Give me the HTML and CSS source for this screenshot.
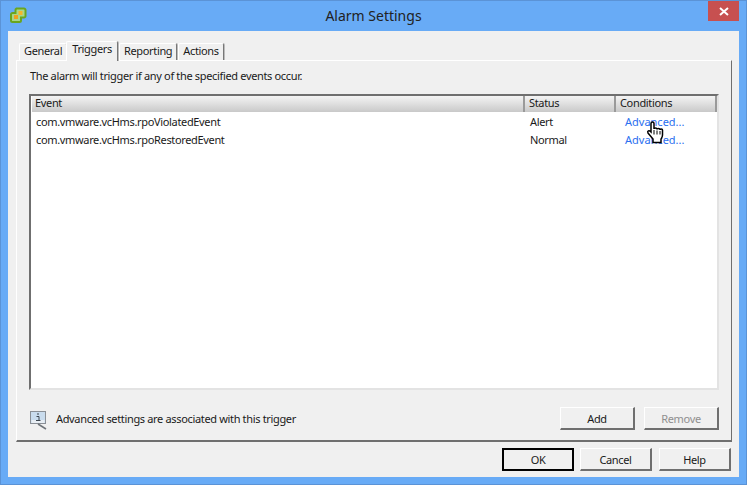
FILE: index.html
```html
<!DOCTYPE html>
<html>
<head>
    <title>Alarm Settings</title>
    <link rel="stylesheet" href="styles.css">
</head>
<body>
<div class="window">
    <div class="titlebar">
        <svg class="app-icon" width="17" height="17" viewBox="0 0 17 17">
            <path d="M6 1.500h8a1.500 1.500 0 0 1 1.500 1.500v6a1.500 1.500 0 0 1-1.500 1.500h-3v3a1.500 1.500 0 0 1-1.500 1.500h-7a1.500 1.500 0 0 1-1.500-1.500v-6a1.500 1.500 0 0 1 1.500-1.500h3v-3a1.500 1.500 0 0 1 1.500-1.500z" fill="#a9d68a" stroke="#6aa51f" stroke-width="2"/>
            <rect x="4" y="8" width="4" height="4" fill="#f0a020"/>
            <rect x="8.500" y="4" width="4" height="4" fill="#f5b52a"/>
        </svg>
        <div class="title">Alarm Settings</div>
        <div class="close">
            <svg width="10" height="9" viewBox="0 0 10 9"><path d="M1 1l8 7M9 1l-8 7" stroke="#fff" stroke-width="2"/></svg>
        </div>
    </div>
    <div class="content">
        <div class="tabs">
            <div class="tab">General</div>
            <div class="tab active">Triggers</div>
            <div class="tab">Reporting</div>
            <div class="tab">Actions</div>
        </div>
        <div class="panel">
            <p class="intro">The alarm will trigger if any of the specified events occur.</p>
            <div class="list">
                <div class="row head">
                    <div class="cell">Event</div>
                    <div class="cell">Status</div>
                    <div class="cell">Conditions</div>
                </div>
                <div class="row">
                    <div class="cell">com.vmware.vcHms.rpoViolatedEvent</div>
                    <div class="cell">Alert</div>
                    <div class="cell link">Advanced...</div>
                </div>
                <div class="row">
                    <div class="cell">com.vmware.vcHms.rpoRestoredEvent</div>
                    <div class="cell">Normal</div>
                    <div class="cell link">Advanced...</div>
                </div>
            </div>
            <div class="panel-foot">
                <svg class="info-icon" width="17" height="19" viewBox="0 0 17 19">
                    <rect x="0.500" y="0.500" width="15" height="12" fill="#c9dcee" stroke="#8a8f96"/>
                    <rect x="1.500" y="9" width="13" height="3" fill="#e8eef4"/>
                    <path d="M7 3h2M6.500 5.500h2.500v3.500M6 9.500h4.500" stroke="#3d4650" stroke-width="1" fill="none"/>
                    <path d="M8 13l8 5" stroke="#6f747a" stroke-width="1.500"/>
                </svg>
                <span class="note">Advanced settings are associated with this trigger</span>
                <div class="btn add">Add</div>
                <div class="btn add disabled">Remove</div>
            </div>
        </div>
        <div class="actions">
            <div class="btn main default">OK</div>
            <div class="btn main">Cancel</div>
            <div class="btn main help">Help</div>
        </div>
    </div>
    <svg class="cursor" width="18" height="23" viewBox="0 0 18 23">
        <path d="M5 2.500c0-2 3-2 3 0v5.500c0-1.500 3-1.500 3 0v.5c0-1.500 3-1.500 3 0v.5c0-1.500 2.500-1.500 2.500 0v5c0 2-1 3-1.500 4v3.500h-8v-3.500l-5-6c-1-2 1-3 2.500-1.500l.5.5z" fill="#fff" stroke="#000" stroke-width="1.500"/>
        <path d="M8 9v4.500M11 9.500v4M14 10v3.500" stroke="#000" stroke-width="1"/>
    </svg>
</div>
</body>
</html>
```

FILE: styles.css
```css
html, body {
    margin: 0;
    height: 100%;
}
body {
    font-family: "Noto Sans", sans-serif;
    font-size: 11px;
    letter-spacing: -0.34px;
    color: #1a1a1a;
    overflow: hidden;
}
.window {
    position: relative;
    box-sizing: border-box;
    width: 747px;
    height: 485px;
    background: #68abf6;
    border: 1px solid #5b93d6;
    display: flex;
    flex-direction: column;
}
.titlebar {
    height: 30px;
    flex: none;
    display: flex;
    padding-left: 9px;
}
.app-icon {
    margin-top: 6px;
}
.title {
    flex: 1;
    text-align: center;
    font-size: 14px;
    letter-spacing: 0;
    line-height: 30px;
    color: #222;
    padding-left: 12px;
}
.close {
    width: 31px;
    height: 20px;
    margin-right: 7px;
    background: #c75050;
    display: flex;
    align-items: center;
    justify-content: center;
}
.content {
    flex: 1;
    margin: 0 7px 7px;
    background: #f0f0f0;
    padding: 9px 8px 6px;
    display: flex;
    flex-direction: column;
}
.tabs {
    display: flex;
    height: 20px;
    padding-left: 3px;
    align-items: flex-end;
}
.tab {
    height: 16px;
    line-height: 13px;
    padding: 0 4px;
    margin-right: 1px;
    background: #f0f0f0;
    border: 1px solid #fff;
    border-bottom: none;
    border-right: 1px solid #777;
    box-shadow: 1px 0 0 #bbb;
    border-radius: 2px 2px 0 0;
}
.tab.active {
    height: 19px;
    line-height: 13px;
    margin-left: -2px;
    padding: 0 5px;
    position: relative;
    top: 1px;
    z-index: 1;
}
.panel {
    box-sizing: border-box;
    height: 382px;
    margin-right: -1px;
    border: 1px solid #fff;
    border-right: 1px solid #6f6f6f;
    border-bottom: 2px solid #6f6f6f;
    padding: 0 12px 0 12px;
    display: flex;
    flex-direction: column;
}
.intro {
    margin: 7px 0 0 1px;
    height: 26px;
    line-height: 15px;
}
.list {
    box-sizing: border-box;
    height: 296px;
    background: #fff;
    border: 2px solid #6f6f6f;
    border-right: 2px solid #e3e3e3;
    border-bottom: 2px solid #e3e3e3;
}
.row {
    display: grid;
    grid-template-columns: 494px 91px 1fr;
    height: 18px;
    line-height: 18px;
}
.row:nth-child(2) {
    margin-top: 1px;
}
.row .cell {
    padding-left: 5px;
}
.row .link {
    padding-left: 9px;
    letter-spacing: 0;
    color: #2b6ff0;
}
.head {
    height: 16px;
    line-height: 14px;
    background: linear-gradient(#f4f4f4, #c9c9c9);
}
.head .cell {
    padding-left: 3px;
    border-left: 1px solid #fff;
    border-right: 2px solid #9a9a9a;
}
.head .cell + .cell {
    padding-left: 4px;
    border-left: none;
}
.panel-foot {
    display: flex;
    align-items: center;
    margin-top: 17px;
    height: 23px;
}
.info-icon {
    margin: 4px 9px 0 1px;
}
.note {
    flex: 1;
}
.btn {
    box-sizing: border-box;
    text-align: center;
    background: #f0f0f0;
    border: 1px solid #fff;
    border-right: 2px solid #6f6f6f;
    border-bottom: 2px solid #6f6f6f;
}
.add {
    width: 75px;
    height: 23px;
    line-height: 22px;
    margin-left: 9px;
}
.disabled {
    color: #8f8f8f;
}
.actions {
    display: flex;
    justify-content: flex-end;
    gap: 6px;
    margin-top: 6px;
}
.main {
    width: 72px;
    height: 23px;
    line-height: 22px;
}
.help {
    margin-left: 1px;
}
.default {
    border: 2px solid #000;
    line-height: 20px;
}
.cursor {
    position: absolute;
    left: 645px;
    top: 120px;
}
```
